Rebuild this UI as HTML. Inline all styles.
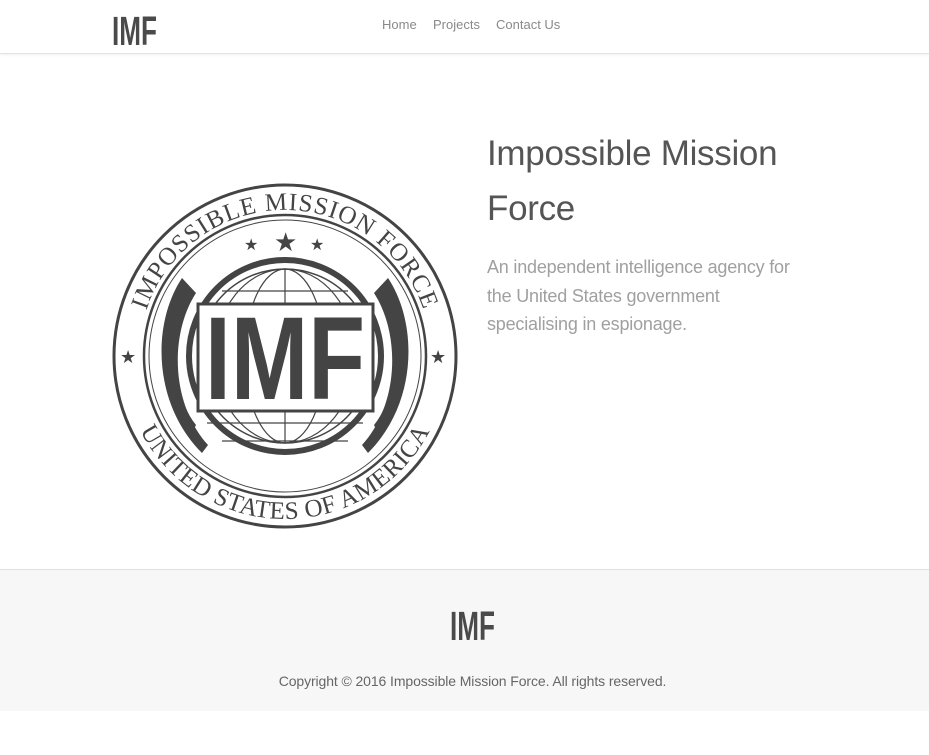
<!DOCTYPE html>
<html><head><meta charset="utf-8"><style>
*{margin:0;padding:0;box-sizing:border-box}
body{width:929px;height:755px;background:#fff;font-family:"Liberation Sans",sans-serif;position:relative;overflow:hidden}
.hdr{position:absolute;left:0;top:0;width:929px;height:54px;background:#fff;border-bottom:1px solid #e2e2e2;box-shadow:0 1px 3px rgba(0,0,0,.06)}
.nav{position:absolute;top:17px;font-size:13px;color:#8a8a8a}
.nav span{position:absolute;white-space:nowrap}
h1{position:absolute;left:487px;top:126px;font-weight:300;font-size:35px;line-height:55px;color:#555;width:360px;letter-spacing:-0.3px}
.lead{position:absolute;left:487px;top:253px;font-size:18px;line-height:28.5px;color:#a0a0a0;width:360px;letter-spacing:-0.2px;white-space:nowrap}
.foot{position:absolute;left:0;top:569px;width:929px;height:142px;background:#f7f7f7;border-top:1px solid #e0e0e0}
.copy{position:absolute;top:103px;left:8px;width:929px;text-align:center;font-size:14px;color:#666;letter-spacing:-0.1px}
</style></head><body>
<div class="hdr">
<svg style="position:absolute;left:112px;top:14px" width="46" height="32" viewBox="0 0 46 32"><text x="0" y="31" font-family="Liberation Sans" font-weight="bold" font-size="41" textLength="45" lengthAdjust="spacingAndGlyphs" fill="#4a4a4a">IMF</text></svg>
<div class="nav"><span style="left:382px">Home</span><span style="left:433px">Projects</span><span style="left:496px">Contact Us</span></div>
</div>

<svg style="position:absolute;left:112px;top:183px" width="346" height="346" viewBox="0 0 346 346">
<defs>
<path id="top" d="M 27 173 A 146 146 0 0 1 319 173"/>
<path id="bot" d="M 10 173 A 163 163 0 0 0 336 173"/>
</defs>
<g fill="none" stroke="#444">
<circle cx="173" cy="173" r="171" stroke-width="3"/>
<circle cx="173" cy="173" r="141" stroke-width="2.5"/>
<circle cx="173" cy="173" r="136" stroke-width="1"/>
<circle cx="173" cy="173" r="96" stroke-width="6"/>
<circle cx="173" cy="173" r="87" stroke-width="1.5"/>
<ellipse cx="173" cy="173" rx="40" ry="87" stroke-width="1.2"/>
<ellipse cx="173" cy="173" rx="70" ry="87" stroke-width="1.2"/>
<line x1="173" y1="86" x2="173" y2="260" stroke-width="1.2"/>
<line x1="95" y1="135" x2="251" y2="135" stroke-width="1.2"/>
<line x1="110" y1="108" x2="236" y2="108" stroke-width="1.2"/>
<line x1="95" y1="240" x2="251" y2="240" stroke-width="1.2"/>
<line x1="110" y1="258" x2="236" y2="258" stroke-width="1.2"/>
</g>
<g fill="#444">
<path d="M70 95 C 40 140,40 220,90 270 L 96 262 C 58 220,58 150,84 110 Z"/>
<path d="M276 95 C 306 140,306 220,256 270 L 250 262 C 288 220,288 150,262 110 Z"/>
<path d="M56 140 C 48 180,56 230,80 250 L 84 242 C 66 220,60 180,66 145 Z"/>
<path d="M290 140 C 298 180,290 230,266 250 L 262 242 C 280 220,286 180,280 145 Z"/>
<text x="162" y="68" font-size="26">★</text>
<text x="132" y="67" font-size="16">★</text>
<text x="198" y="67" font-size="16">★</text>
<text x="8" y="180" font-size="18">★</text>
<text x="318" y="180" font-size="18">★</text>
</g>
<rect x="86" y="121" width="175" height="107" fill="#fff" stroke="#444" stroke-width="3"/>
<text x="173" y="216" text-anchor="middle" font-family="Liberation Sans" font-weight="bold" font-size="118" textLength="160" lengthAdjust="spacingAndGlyphs" fill="#444">IMF</text>
<text font-family="Liberation Serif" font-size="25" fill="#444" letter-spacing="1"><textPath href="#top" startOffset="50%" text-anchor="middle">IMPOSSIBLE MISSION FORCE</textPath></text>
<text font-family="Liberation Serif" font-size="25" fill="#444" letter-spacing="0.5"><textPath href="#bot" startOffset="50%" text-anchor="middle">UNITED STATES OF AMERICA</textPath></text>
</svg>

<h1>Impossible Mission Force</h1>
<div class="lead">An independent intelligence agency for<br>the United States government<br>specialising in espionage.</div>

<div class="foot">
<svg style="position:absolute;left:450px;top:39px" width="46" height="32" viewBox="0 0 46 32"><text x="0" y="31" font-family="Liberation Sans" font-weight="bold" font-size="41" textLength="45" lengthAdjust="spacingAndGlyphs" fill="#4a4a4a">IMF</text></svg>
<div class="copy">Copyright © 2016 Impossible Mission Force. All rights reserved.</div>
</div>
</body></html>
